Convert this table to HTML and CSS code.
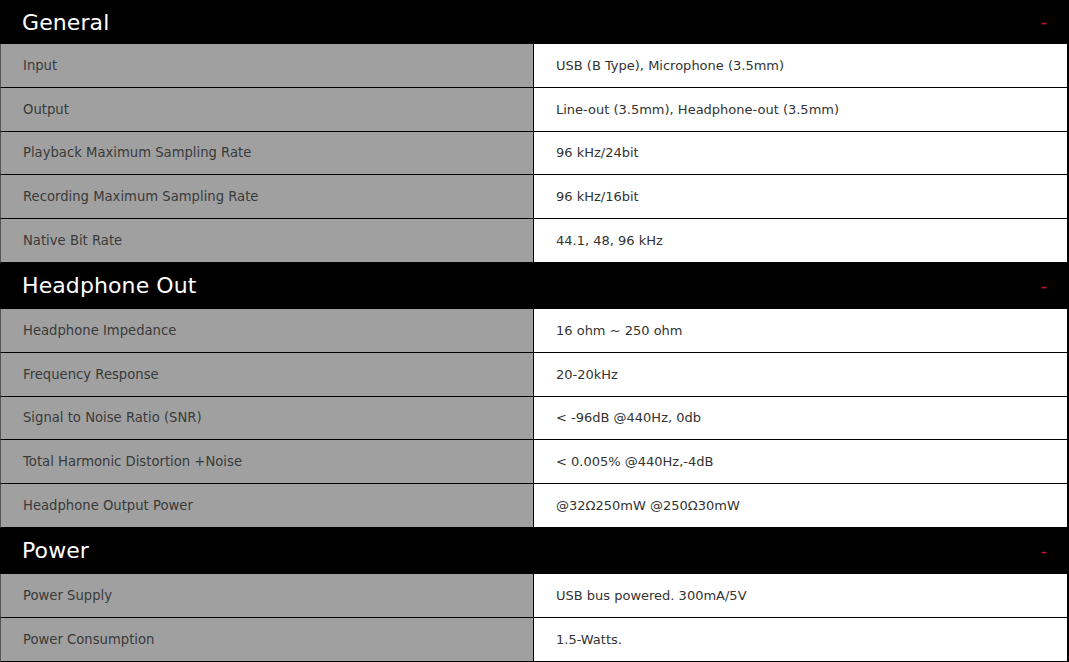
FILE: index.html
```html
<!DOCTYPE html>
<html>
<head>
<meta charset="utf-8">
<link rel="stylesheet" href="styles.css">
</head>
<body>
<div class="specs">
  <section class="group">
    <div class="group-head first"><h2>General</h2><span class="toggle">-</span></div>
    <div class="row"><div class="label">Input</div><div class="value">USB (B Type), Microphone (3.5mm)</div></div>
    <div class="row"><div class="label">Output</div><div class="value">Line-out (3.5mm), Headphone-out (3.5mm)</div></div>
    <div class="row"><div class="label">Playback Maximum Sampling Rate</div><div class="value">96 kHz/24bit</div></div>
    <div class="row"><div class="label">Recording Maximum Sampling Rate</div><div class="value">96 kHz/16bit</div></div>
    <div class="row"><div class="label">Native Bit Rate</div><div class="value">44.1, 48, 96 kHz</div></div>
  </section>
  <section class="group">
    <div class="group-head"><h2>Headphone Out</h2><span class="toggle">-</span></div>
    <div class="row"><div class="label">Headphone Impedance</div><div class="value">16 ohm ~ 250 ohm</div></div>
    <div class="row"><div class="label">Frequency Response</div><div class="value">20-20kHz</div></div>
    <div class="row"><div class="label">Signal to Noise Ratio (SNR)</div><div class="value">&lt; -96dB @440Hz, 0db</div></div>
    <div class="row"><div class="label">Total Harmonic Distortion +Noise</div><div class="value">&lt; 0.005% @440Hz,-4dB</div></div>
    <div class="row"><div class="label">Headphone Output Power</div><div class="value">@32Ω250mW @250Ω30mW</div></div>
  </section>
  <section class="group">
    <div class="group-head"><h2>Power</h2><span class="toggle">-</span></div>
    <div class="row"><div class="label">Power Supply</div><div class="value">USB bus powered. 300mA/5V</div></div>
    <div class="row last"><div class="label">Power Consumption</div><div class="value">1.5-Watts.</div></div>
  </section>
</div>
</body>
</html>
```
FILE: styles.css
```css
html, body {
  margin: 0;
  padding: 0;
  background: #ffffff;
}
body {
  font-family: "DejaVu Sans", "Liberation Sans", sans-serif;
  overflow: hidden;
}
.specs {
  width: 1069px;
  display: flex;
  flex-direction: column;
}
.group {
  display: flex;
  flex-direction: column;
}
.group-head {
  background: #000;
  height: 46px;
  flex: none;
  display: flex;
  align-items: center;
  justify-content: space-between;
  padding: 0 22px;
  box-sizing: border-box;
}
.group-head.first {
  height: 44px;
}
.group-head h2 {
  margin: 0;
  color: #fff;
  font-weight: 400;
  font-size: 22px;
  letter-spacing: 0.1px;
}
.toggle {
  color: #d0103a;
  font-size: 18px;
  line-height: 1;
}
.row {
  display: grid;
  grid-template-columns: 533px 1fr;
  height: 43.8px;
  flex: none;
  border-left: 1px solid #555;
  border-right: 2px solid #000;
  border-bottom: 1px solid #000;
  box-sizing: border-box;
}
.row.last {
  border-bottom: 2px solid #000;
  height: 45px;
}
.label {
  background: #a0a0a0;
  color: #3a3a3a;
  font-size: 13.2px;
  display: flex;
  align-items: center;
  padding-left: 22px;
  border-right: 1px solid #000;
}
.value {
  background: #fff;
  color: #333;
  font-size: 13px;
  display: flex;
  align-items: center;
  padding-left: 22px;
}
```
